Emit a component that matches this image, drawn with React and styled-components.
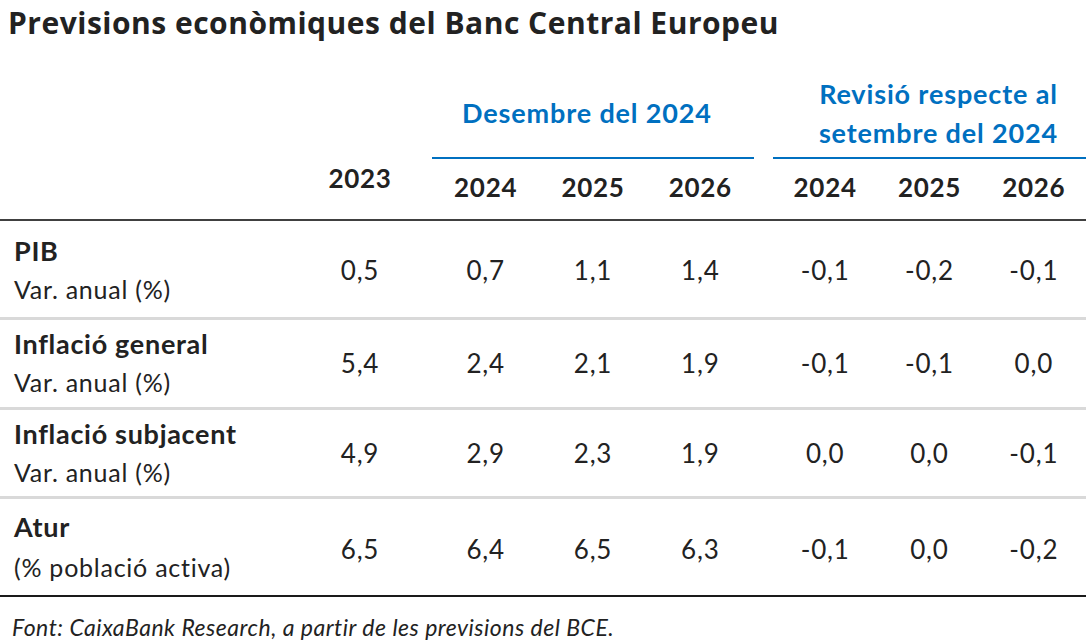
import React from 'react';
import styled, { createGlobalStyle } from 'styled-components';

const GlobalStyle = createGlobalStyle`
  html, body {
    margin: 0;
    padding: 0;
    background: #fff;
  }
  body {
    font-family: Lato, 'Liberation Sans', sans-serif;
    color: #222;
  }
`;

const COLS = '300px 120px 12px repeat(3, 107.33px) 19px repeat(3, 104.33px)';
const BLUE = '#0070c0';

const Page = styled.div`
  width: 1086px;
`;

const Title = styled.h1`
  margin: 0;
  padding: 3px 0 0 8px;
  height: 56px;
  box-sizing: border-box;
  font-family: 'Open Sans', sans-serif;
  font-weight: 700;
  font-size: 30px;
  letter-spacing: 0.5px;
  line-height: 40px;
  color: #222;
`;

const Head = styled.div`
  display: grid;
  grid-template-columns: ${COLS};
  grid-template-rows: 103px 60px;
  border-bottom: 2px solid #404040;
`;

// group caption with the blue rule under it; $left/$right nudge the text sideways
const GroupTitle = styled.div`
  grid-column: ${(p) => p.$col};
  grid-row: 1;
  display: flex;
  align-items: center;
  justify-content: center;
  text-align: center;
  padding: 14px ${(p) => p.$right || 0}px 2px ${(p) => p.$left || 0}px;
  border-bottom: 2px solid ${BLUE};
  color: ${BLUE};
  font-weight: 700;
  font-size: 27px;
  letter-spacing: 0.85px;
  line-height: 39px;
`;

const BaseYear = styled.div`
  grid-column: 2;
  grid-row: 1 / 3;
  align-self: end;
  text-align: center;
  padding-bottom: 26px;
  font-weight: 700;
  font-size: 26px;
  letter-spacing: 0.7px;
  line-height: 30px;
`;

const Year = styled.div`
  grid-column: ${(p) => p.$col};
  grid-row: 2;
  display: flex;
  align-items: center;
  justify-content: center;
  padding-bottom: 4px;
  font-weight: 700;
  font-size: 26px;
  letter-spacing: 0.7px;
`;

const Row = styled.div`
  display: grid;
  grid-template-columns: ${COLS};
  align-items: center;
  padding: ${(p) => p.$pad};
  border-bottom: ${(p) => (p.$last ? '2px solid #1a1a1a' : '3px solid #d9d9d9')};
`;

const Label = styled.div`
  grid-column: 1;
  padding-left: 14px;
`;

const Name = styled.div`
  font-weight: 700;
  font-size: 27px;
  letter-spacing: 0.7px;
  line-height: 38px;
`;

const Unit = styled.div`
  font-size: 25px;
  letter-spacing: 0.75px;
  line-height: ${(p) => (p.$tall ? '43px' : '38px')};
`;

const Value = styled.div`
  grid-column: ${(p) => p.$col};
  text-align: center;
  font-size: 26px;
  letter-spacing: 0.8px;
`;

const Note = styled.div`
  padding: 15px 0 0 12px;
  font-style: italic;
  font-size: 23px;
  letter-spacing: 0.5px;
  line-height: 30px;
`;

const groups = [
  { col: '4 / 7', text: 'Desembre del 2024', right: 12 },
  { col: '8 / 11', text: <>Revisió respecte al<br />setembre del 2024</>, left: 18 },
];

const yearCols = [
  [4, '2024'], [5, '2025'], [6, '2026'],
  [8, '2024'], [9, '2025'], [10, '2026'],
];

const valueCols = [2, 4, 5, 6, 8, 9, 10];

const rows = [
  { name: 'PIB', unit: 'Var. anual (%)', values: ['0,5', '0,7', '1,1', '1,4', '-0,1', '-0,2', '-0,1'], pad: '11px 0 9px' },
  { name: 'Inflació general', unit: 'Var. anual (%)', values: ['5,4', '2,4', '2,1', '1,9', '-0,1', '-0,1', '0,0'], pad: '5px 0 6px' },
  { name: 'Inflació subjacent', unit: 'Var. anual (%)', values: ['4,9', '2,9', '2,3', '1,9', '0,0', '0,0', '-0,1'], pad: '5px 0 5px' },
  { name: 'Atur', unit: '(% població activa)', values: ['6,5', '6,4', '6,5', '6,3', '-0,1', '0,0', '-0,2'], pad: '9px 0 6px', last: true },
];

export default function App() {
  return (
    <Page>
      <GlobalStyle />
      <Title>Previsions econòmiques del Banc Central Europeu</Title>
      <Head>
        {groups.map((g, i) => (
          <GroupTitle key={i} $col={g.col} $left={g.left} $right={g.right}>{g.text}</GroupTitle>
        ))}
        <BaseYear>2023</BaseYear>
        {yearCols.map(([col, y]) => (
          <Year key={col} $col={col}>{y}</Year>
        ))}
      </Head>
      {rows.map((r) => (
        <Row key={r.name} $pad={r.pad} $last={r.last}>
          <Label>
            <Name>{r.name}</Name>
            <Unit $tall={r.last}>{r.unit}</Unit>
          </Label>
          {r.values.map((v, i) => (
            <Value key={i} $col={valueCols[i]}>{v}</Value>
          ))}
        </Row>
      ))}
      <Note>Font: CaixaBank Research, a partir de les previsions del BCE.</Note>
    </Page>
  );
}
